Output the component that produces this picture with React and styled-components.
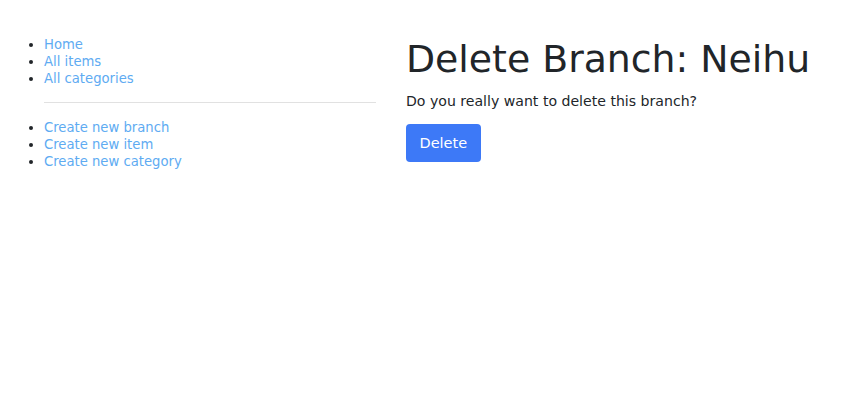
import React from "react";
import styled, { createGlobalStyle } from "styled-components";

const GlobalStyle = createGlobalStyle`
  html, body { margin: 0; padding: 0; background: #ffffff; }
  body {
    font-family: "DejaVu Sans", Verdana, sans-serif;
    color: #212529;
  }
`;

const Page = styled.div`
  display: flex;
  align-items: flex-start;
  gap: 30px;
  padding: 36px 0 0 12px;
`;

const Sidebar = styled.nav`
  width: 364px;
  flex: none;
`;

const NavList = styled.ul`
  margin: 0;
  padding-left: 32px;
  font-size: 13.2px;
  line-height: 17px;
`;

const NavItem = styled.li`
  color: #212529;
`;

const NavLink = styled.a`
  color: #5eabf2;
  text-decoration: none;
`;

const Divider = styled.hr`
  margin: 15px 0 16px 32px;
  border: 0;
  border-top: 1px solid #e1e1e1;
  height: 0;
`;

const Main = styled.main`
  padding-top: 1px;
`;

const Title = styled.h1`
  margin: 0 0 9px;
  font-size: 37.8px;
  font-weight: 400;
  line-height: 1.2;
  color: #212529;
`;

const Text = styled.p`
  margin: 0 0 13px;
  font-size: 14.1px;
  line-height: 20px;
`;

const DangerButton = styled.button`
  display: inline-block;
  height: 38px;
  padding: 0 13.5px;
  border: 0;
  border-radius: 4px;
  background: #3d79f7;
  color: #ffffff;
  font-family: "DejaVu Sans", Verdana, sans-serif;
  font-size: 14.5px;
  line-height: 38px;
  cursor: pointer;
`;

const primaryLinks = ["Home", "All items", "All categories"];
const createLinks = ["Create new branch", "Create new item", "Create new category"];

export default function App() {
  return (
    <>
      <GlobalStyle />
      <Page>
        <Sidebar>
          <NavList>
            {primaryLinks.map((l) => (
              <NavItem key={l}>
                <NavLink href="#">{l}</NavLink>
              </NavItem>
            ))}
          </NavList>
          <Divider />
          <NavList>
            {createLinks.map((l) => (
              <NavItem key={l}>
                <NavLink href="#">{l}</NavLink>
              </NavItem>
            ))}
          </NavList>
        </Sidebar>
        <Main>
          <Title>Delete Branch: Neihu</Title>
          <Text>Do you really want to delete this branch?</Text>
          <DangerButton type="button">Delete</DangerButton>
        </Main>
      </Page>
    </>
  );
}
